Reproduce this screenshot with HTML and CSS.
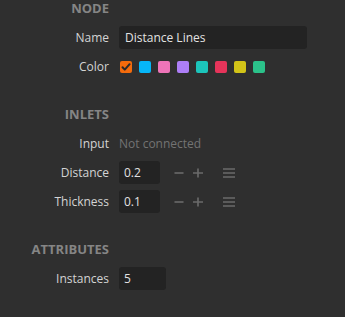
FILE: index.html
```html
<html lang="en">
<head>
  <meta charset="UTF-8" />
  <title>Node Inspector</title>
  <link rel="stylesheet" href="styles.css">
</head>
<body>
  <div class="inspector">

    <section class="group">
      <div class="row heading"><span class="label">Node</span></div>
      <div class="row">
        <span class="label">Name</span>
        <div class="field wide">Distance Lines</div>
      </div>
      <div class="row">
        <span class="label">Color</span>
        <div class="swatches">
          <span class="swatch checked" style="background:#f46b0c">
            <svg width="12" height="12" viewBox="0 0 12 12"><path d="M2.5 6.2 L4.8 8.6 L9.6 3.2" fill="none" stroke="#2a2a2a" stroke-width="2" stroke-linecap="round" stroke-linejoin="round"/></svg>
          </span>
          <span class="swatch" style="background:#06b6f8"></span>
          <span class="swatch" style="background:#ee74b8"></span>
          <span class="swatch" style="background:#ad7ef7"></span>
          <span class="swatch" style="background:#1cc5bb"></span>
          <span class="swatch" style="background:#e6345a"></span>
          <span class="swatch" style="background:#d2c418"></span>
          <span class="swatch" style="background:#2bc28a"></span>
        </div>
      </div>
    </section>

    <section class="group">
      <div class="row heading"><span class="label">Inlets</span></div>
      <div class="row">
        <span class="label">Input</span>
        <span class="muted">Not connected</span>
      </div>
      <div class="row">
        <span class="label">Distance</span>
        <div class="field small">0.2</div>
        <div class="tools">
          <svg width="10" height="10" viewBox="0 0 10 10"><path d="M0.5 5 H9.5" stroke="#6b6b6b" stroke-width="1.6"/></svg>
          <svg width="10" height="10" viewBox="0 0 10 10"><path d="M0 5 H10 M5 0.5 V9.5" stroke="#6b6b6b" stroke-width="1.6"/></svg>
          <svg class="menu" width="12" height="10" viewBox="0 0 12 10"><path d="M0 1 H12 M0 5 H12 M0 9 H12" stroke="#6b6b6b" stroke-width="1.6"/></svg>
        </div>
      </div>
      <div class="row">
        <span class="label">Thickness</span>
        <div class="field small">0.1</div>
        <div class="tools">
          <svg width="10" height="10" viewBox="0 0 10 10"><path d="M0.5 5 H9.5" stroke="#6b6b6b" stroke-width="1.6"/></svg>
          <svg width="10" height="10" viewBox="0 0 10 10"><path d="M0 5 H10 M5 0.5 V9.5" stroke="#6b6b6b" stroke-width="1.6"/></svg>
          <svg class="menu" width="12" height="10" viewBox="0 0 12 10"><path d="M0 1 H12 M0 5 H12 M0 9 H12" stroke="#6b6b6b" stroke-width="1.6"/></svg>
        </div>
      </div>
    </section>

    <section class="group">
      <div class="row heading"><span class="label">Attributes</span></div>
      <div class="row">
        <span class="label">Instances</span>
        <div class="field medium">5</div>
      </div>
    </section>

  </div>
</body>
</html>
```

FILE: styles.css
```css
* { box-sizing: border-box; }

body {
  margin: 0;
  background: #2f2f2f;
  font-family: 'Open Sans', sans-serif;
  font-size: 12px;
  color: #d4d4d4;
}

.inspector {
  display: flex;
  flex-direction: column;
  gap: 28px;
}

.group {
  display: flex;
  flex-direction: column;
  gap: 6px;
}

.row {
  display: flex;
  align-items: center;
  gap: 10px;
  height: 23px;
}

.label {
  width: 109px;
  text-align: right;
  flex-shrink: 0;
}

.heading {
  height: 16px;
  margin-bottom: 4px;
}

.heading .label {
  font-size: 13px;
  font-weight: bold;
  text-transform: uppercase;
  color: #858585;
}

.field {
  height: 23px;
  line-height: 23px;
  background: #232323;
  border-radius: 3px;
  padding: 0 6px;
  color: #e2e2e2;
}

.field.wide { width: 188px; }
.field.small { width: 41px; padding-left: 5px; }
.field.medium { width: 47px; padding-left: 5px; }

.muted { color: #737373; }

.swatches {
  display: flex;
  gap: 7px;
  margin-left: 1px;
}

.swatch {
  width: 12px;
  height: 12px;
  border-radius: 2px;
  display: flex;
}

.tools {
  display: flex;
  align-items: center;
  gap: 9px;
  margin-left: 4px;
}

.tools .menu { margin-left: 11px; }
```
